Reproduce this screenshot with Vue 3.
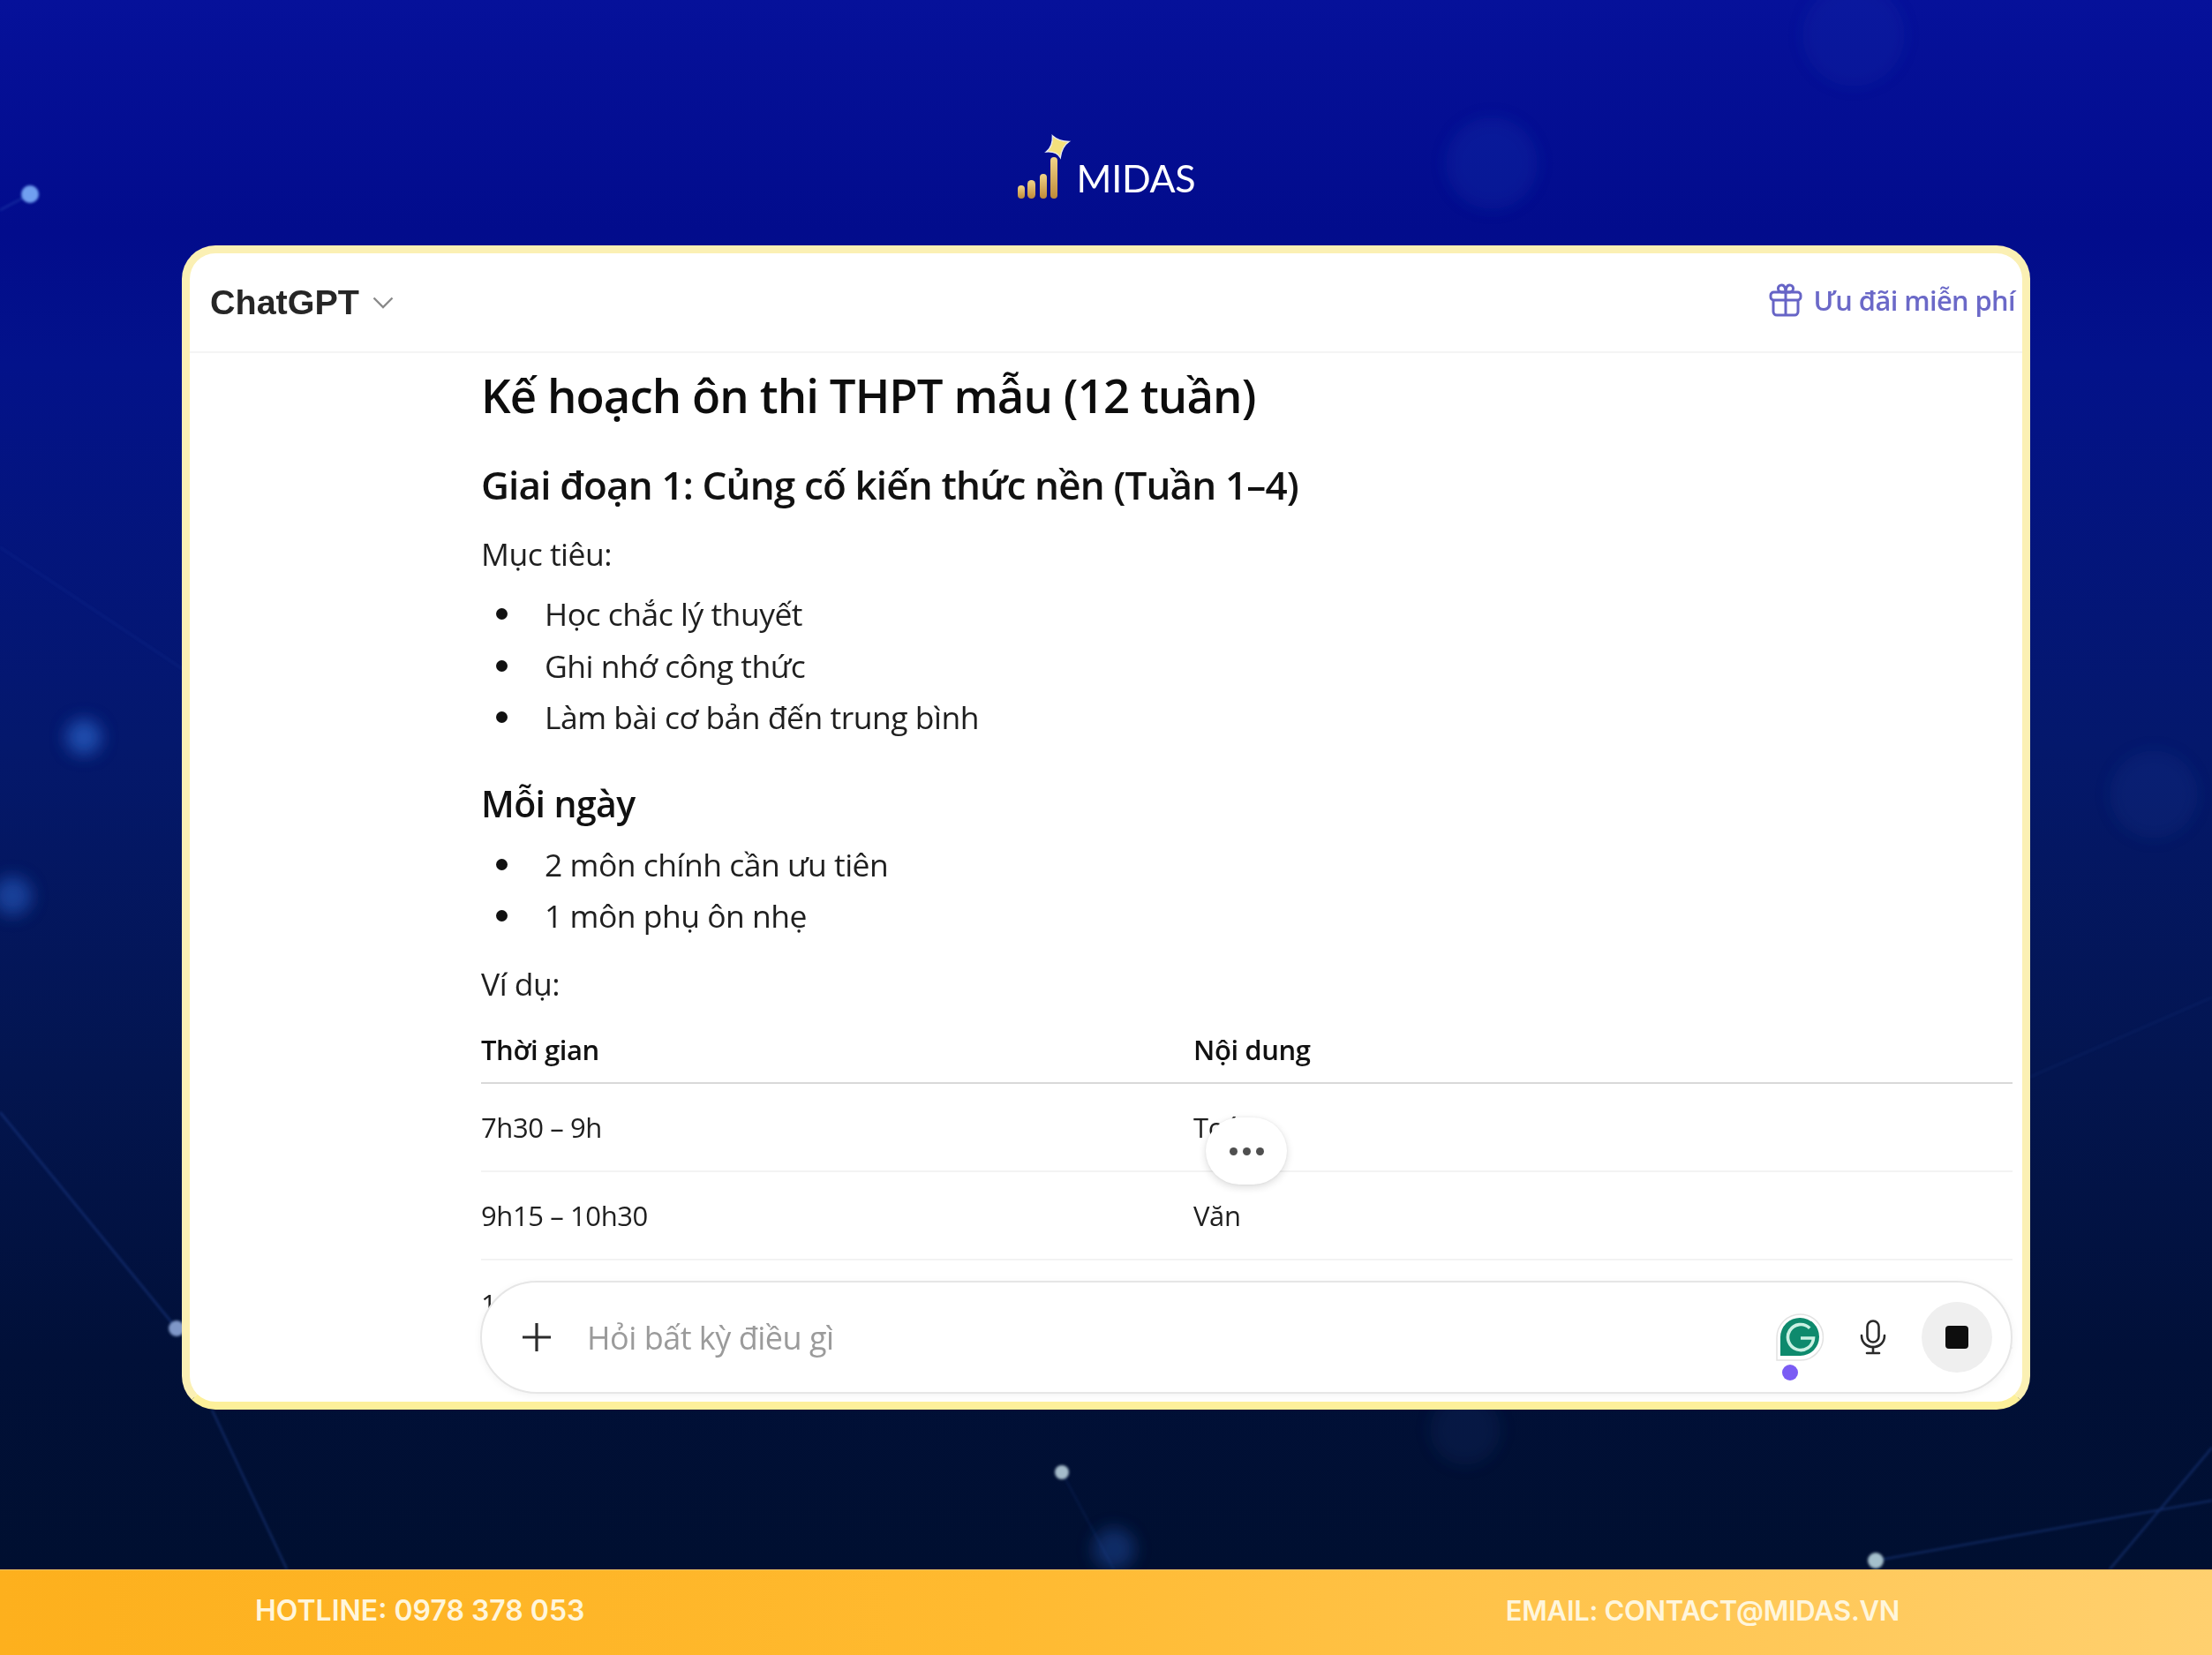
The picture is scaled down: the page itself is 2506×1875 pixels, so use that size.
<script setup>
const goals = ['Học chắc lý thuyết', 'Ghi nhớ công thức', 'Làm bài cơ bản đến trung bình']
const daily = ['2 môn chính cần ưu tiên', '1 môn phụ ôn nhẹ']
const rows = [
  { time: '7h30 – 9h', topic: 'Toán' },
  { time: '9h15 – 10h30', topic: 'Văn' },
  { time: '1', topic: '' }
]
</script>

<template>
  <div class="page">
    <svg class="backdrop" width="2506" height="1875" viewBox="0 0 2506 1875" aria-hidden="true">
      <defs>
        <filter id="soft"><feGaussianBlur stdDeviation="1.5" /></filter>
        <filter id="softer"><feGaussianBlur stdDeviation="9" /></filter>
      </defs>
      <g fill="none" stroke="#2f58b8" stroke-width="2" opacity=".4" filter="url(#soft)">
        <path d="M0 238 34 220" />
        <path d="M0 1260 200 1505" />
        <path d="M240 1597 325 1778" />
        <path d="M2125 1768 2506 1700" />
        <path d="M2390 1778 2506 1640" />
        <path d="M1203 1668 1262 1778" opacity=".4" />
        <path d="M0 620 210 760" opacity=".4" />
        <path d="M2300 1220 2506 1130" opacity=".3" />
      </g>
      <g filter="url(#softer)" fill="#2a62c8">
        <circle cx="95" cy="835" r="20" opacity=".7" />
        <circle cx="14" cy="1015" r="22" opacity=".55" />
        <circle cx="1690" cy="185" r="52" opacity=".13" />
        <circle cx="2100" cy="40" r="58" opacity=".09" />
        <circle cx="2440" cy="900" r="50" opacity=".1" />
        <circle cx="1262" cy="1755" r="24" opacity=".35" />
        <circle cx="1660" cy="1620" r="40" opacity=".1" />
      </g>
      <g filter="url(#soft)">
        <circle cx="34" cy="220" r="10" fill="#6f9ff0" />
        <circle cx="200" cy="1505" r="9" fill="#7f97c8" />
        <circle cx="1203" cy="1668" r="8" fill="#a5bccb" />
        <circle cx="2125" cy="1768" r="9" fill="#a5c0cc" />
      </g>
    </svg>

    <header class="brand">
      <svg class="brand-mark" width="62" height="80" viewBox="0 0 62 80" aria-hidden="true">
        <defs>
          <linearGradient id="gold" x1="0" y1="0" x2="0" y2="1">
            <stop offset="0" stop-color="#f1d488" />
            <stop offset="1" stop-color="#bf8a38" />
          </linearGradient>
        </defs>
        <rect x="1" y="65" width="8" height="15" rx="4" fill="url(#gold)" />
        <rect x="12" y="59" width="9" height="21" rx="4.500" fill="url(#gold)" />
        <rect x="26" y="52" width="8" height="28" rx="4" fill="url(#gold)" />
        <rect x="38" y="33" width="8" height="47" rx="4" fill="url(#gold)" />
        <path d="M40.300 8.700Q47 15 59.300 15.300Q51 21 49.300 33.700Q45 26 33.300 27Q41 21 40.300 8.700Z" fill="#f4e07c" stroke="#e9edf7" stroke-width="1.300" />
      </svg>
      <span class="brand-name">MIDAS</span>
    </header>

    <main class="card">
      <div class="topbar">
        <div class="model">
          <span>ChatGPT</span>
          <svg width="24" height="14" viewBox="0 0 24 14" aria-hidden="true">
            <path d="M1.500 1.500 12 12 22.500 1.500" fill="none" stroke="#8a8a8a" stroke-width="2.400" />
          </svg>
        </div>
        <div class="offer">
          <svg width="38" height="38" viewBox="0 0 38 38" fill="none" stroke="#6664c6" stroke-width="3" stroke-linejoin="round" aria-hidden="true">
            <rect x="2" y="10" width="34" height="9" rx="3.500" />
            <path d="M5 19v13a4 4 0 0 0 4 4h20a4 4 0 0 0 4-4V19" />
            <path d="M19 10v26" />
            <path d="M19 10h-5a4 4 0 1 1 3-7c1.500 1.500 2 4 2 7Zm0 0h5a4 4 0 1 0-3-7c-1.500 1.500-2 4-2 7Z" />
          </svg>
          <span>Ưu đãi miễn phí</span>
        </div>
      </div>

      <section class="thread">
        <h1>Kế hoạch ôn thi THPT mẫu (12 tuần)</h1>
        <h2>Giai đoạn 1: Củng cố kiến thức nền (Tuần 1–4)</h2>
        <p class="goal">Mục tiêu:</p>
        <ul>
          <li v-for="item in goals" :key="item">{{ item }}</li>
        </ul>
        <h3>Mỗi ngày</h3>
        <ul class="after-heading">
          <li v-for="item in daily" :key="item">{{ item }}</li>
        </ul>
        <p class="sample">Ví dụ:</p>
        <div class="table">
          <div class="table-head">
            <span>Thời gian</span>
            <span>Nội dung</span>
          </div>
          <div v-for="row in rows" :key="row.time" class="table-row">
            <span>{{ row.time }}</span>
            <span>{{ row.topic }}</span>
          </div>
        </div>
      </section>

      <div class="scroll-bubble" aria-hidden="true"><i></i><i></i><i></i></div>

      <div class="composer">
        <svg class="plus" width="34" height="34" viewBox="0 0 34 34" aria-hidden="true">
          <path d="M17 1v32M1 17h32" stroke="#2c2c2c" stroke-width="3.200" />
        </svg>
        <span class="placeholder">Hỏi bất kỳ điều gì</span>
        <div class="grammarly">
          <svg width="54" height="54" viewBox="0 0 54 54" aria-hidden="true">
            <path d="M27.500 1A26 26 0 0 1 27.500 53H1V27.500A26.500 26.500 0 0 1 27.500 1Z" fill="#fff" stroke="#e2e2e2" stroke-width="1.500" />
            <path d="M27.500 5A21.500 21.500 0 0 1 27.500 48H5V27A22 22 0 0 1 27.500 5Z" fill="#0e8a6d" />
            <path d="M38.250 16.750A14.500 14.500 0 1 0 42.500 28H28" fill="none" stroke="#c9f1e3" stroke-width="3.600" />
          </svg>
          <b></b>
        </div>
        <svg class="mic" width="30" height="40" viewBox="0 0 30 40" fill="none" stroke="#2a2a2a" stroke-width="2.600" stroke-linecap="round" aria-hidden="true">
          <rect x="8.500" y="1.500" width="13" height="24" rx="6.500" />
          <path d="M2 18c0 8 5.500 13 13 13s13-5 13-13" />
          <path d="M15 31v6M8 38h14" />
        </svg>
        <button class="stop" type="button" aria-label="Dừng"><span></span></button>
      </div>
    </main>

    <footer class="contact">
      <span>HOTLINE: 0978 378 053</span>
      <span class="email">EMAIL: CONTACT@MIDAS.VN</span>
    </footer>
  </div>
</template>

<style>
html, body { margin: 0; background: #010f33; }
</style>

<style scoped>
.page {
  position: relative;
  width: 2506px;
  height: 1875px;
  overflow: hidden;
  display: flex;
  flex-direction: column;
  background: linear-gradient(180deg, #06119a 0%, #020c8c 14%, #03128a 22%, #04186c 45%, #03154f 65%, #011038 82%, #000f30 95%);
  font-family: "Open Sans", "Noto Sans", sans-serif;
}
.backdrop { position: absolute; inset: 0; }
.brand {
  position: relative;
  display: flex;
  align-items: flex-end;
  justify-content: center;
  gap: 6px;
  height: 80px;
  padding-top: 145px;
}
.brand-mark { flex: none; }
.brand-name {
  font: 400 43px/1 Lato, sans-serif;
  color: #fff;
  letter-spacing: -0.3px;
  margin-bottom: 2px;
}
.card {
  position: relative;
  box-sizing: border-box;
  width: 2094px;
  height: 1319px;
  margin: 53px 0 0 206px;
  display: flex;
  flex-direction: column;
  background: #fff;
  border: 9px solid #fbf0b4;
  border-bottom-color: #fdf09a;
  border-radius: 38px;
  overflow: hidden;
  color: #1f1f1f;
}
.topbar {
  flex: none;
  box-sizing: border-box;
  height: 113px;
  padding: 0 8px 0 23px;
  display: flex;
  align-items: center;
  justify-content: space-between;
  border-bottom: 2px solid #f4f4f4;
}
.model {
  display: flex;
  align-items: center;
  gap: 15px;
  font: 700 39.500px/1 "Liberation Sans", sans-serif;
  color: #262626;
}
.offer {
  display: flex;
  align-items: center;
  gap: 12px;
  margin-bottom: 5px;
  font-size: 30.800px;
  font-weight: 600;
  color: #6b69c8;
  letter-spacing: -0.6px;
}
.thread {
  flex: 1;
  min-height: 0;
  padding: 0 11px 0 330px;
}
h1 {
  margin: 15px 0 0;
  font-size: 52.700px;
  line-height: 66px;
  font-weight: 600;
  color: #0d0d0d;
  letter-spacing: -0.9px;
}
h2 {
  margin: 39px 0 0;
  font-size: 44px;
  line-height: 58px;
  font-weight: 600;
  color: #111;
  letter-spacing: -0.85px;
}
h3 {
  margin: 40px 0 0;
  font-size: 41px;
  line-height: 56px;
  font-weight: 600;
  color: #111;
  letter-spacing: -0.6px;
}
p {
  margin: 0;
  font-size: 35.500px;
  line-height: 58px;
  letter-spacing: -0.5px;
}
.goal { margin-top: 20px; }
.sample { margin-top: 18px; }
ul {
  margin: 10px 0 0;
  padding: 0 0 0 72px;
  list-style: none;
  font-size: 35.500px;
  line-height: 58.600px;
  letter-spacing: -0.5px;
}
.after-heading { margin-top: 12px; }
li { position: relative; }
li::before {
  content: "";
  position: absolute;
  left: -55px;
  top: 23px;
  width: 13px;
  height: 13px;
  border-radius: 50%;
  background: #111;
}
.table { margin-top: 10px; font-size: 31px; letter-spacing: -0.4px; }
.table-head, .table-row {
  display: grid;
  grid-template-columns: 807px 1fr;
  align-items: center;
  box-sizing: border-box;
}
.table-head {
  height: 75px;
  font-weight: 600;
  color: #111;
  border-bottom: 2px solid #d9d9d9;
}
.table-row {
  height: 100px;
  border-bottom: 2px solid #f3f3f3;
}
.scroll-bubble {
  position: absolute;
  left: 1151px;
  top: 979px;
  width: 92px;
  height: 76px;
  display: flex;
  align-items: center;
  justify-content: center;
  gap: 6px;
  border-radius: 38px;
  background: #fff;
  box-shadow: 0 3px 10px rgba(0, 0, 0, .14), 0 0 3px rgba(0, 0, 0, .06);
}
.scroll-bubble i {
  width: 9px;
  height: 9px;
  border-radius: 50%;
  background: #4f4f4f;
}
.composer {
  position: absolute;
  left: 329px;
  right: 11px;
  top: 1164px;
  height: 128px;
  box-sizing: border-box;
  display: flex;
  align-items: center;
  padding: 0 21px 0 45px;
  background: #fff;
  border: 2px solid #e6e6e6;
  border-radius: 64px;
  box-shadow: 0 2px 10px rgba(0, 0, 0, .05);
}
.plus { flex: none; }
.placeholder {
  flex: 1;
  margin-left: 40px;
  font-size: 36px;
  color: #9b9b9b;
  letter-spacing: -0.5px;
}
.grammarly { position: relative; width: 54px; height: 54px; margin-right: 41px; }
.grammarly svg { display: block; }
.grammarly b {
  position: absolute;
  left: 7px;
  top: 58px;
  width: 18px;
  height: 18px;
  border-radius: 50%;
  background: #7b5cf4;
}
.mic { flex: none; margin-right: 40px; }
.stop {
  flex: none;
  width: 80px;
  height: 80px;
  padding: 0;
  border: 0;
  border-radius: 50%;
  background: #efefef;
  display: flex;
  align-items: center;
  justify-content: center;
}
.stop span { width: 26px; height: 26px; border-radius: 4px; background: #0e0e0e; }
.contact {
  position: relative;
  margin-top: auto;
  box-sizing: border-box;
  height: 97px;
  display: flex;
  align-items: center;
  justify-content: space-between;
  padding: 0 354px 5px 289px;
  background: linear-gradient(90deg, #fdb01d 0%, #ffba30 45%, #ffd06f 100%);
  border-top: 1px solid #f3c264;
  font: 600 32px/1 Inter, sans-serif;
  color: #fff6dc;
}
.email { font-size: 31px; letter-spacing: -0.3px; }
</style>
